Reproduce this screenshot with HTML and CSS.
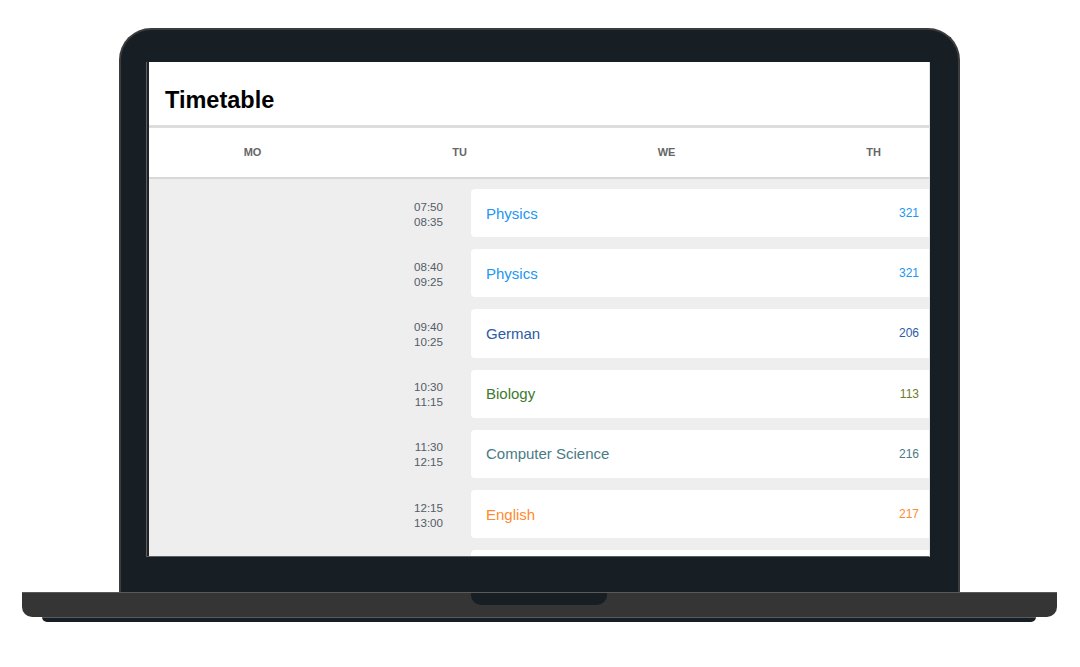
FILE: index.html
```html
<!DOCTYPE html>
<html lang="en">
<head>
<meta charset="utf-8">
<title>Timetable</title>
<link rel="stylesheet" href="styles.css">
</head>
<body>
<div class="device">
  <div class="lid">
    <div class="screen">
      <div class="app">
        <header class="app-header"><h1>Timetable</h1></header>
        <div class="days">
          <div class="day">MO</div>
          <div class="day">TU</div>
          <div class="day">WE</div>
          <div class="day">TH</div>
        </div>
        <div class="lessons">
          <div class="lesson physics">
            <div class="time"><span>07:50</span><span>08:35</span></div>
            <div class="card"><span class="subject">Physics</span><span class="room">321</span></div>
          </div>
          <div class="lesson physics">
            <div class="time"><span>08:40</span><span>09:25</span></div>
            <div class="card"><span class="subject">Physics</span><span class="room">321</span></div>
          </div>
          <div class="lesson german">
            <div class="time"><span>09:40</span><span>10:25</span></div>
            <div class="card"><span class="subject">German</span><span class="room">206</span></div>
          </div>
          <div class="lesson biology">
            <div class="time"><span>10:30</span><span>11:15</span></div>
            <div class="card"><span class="subject">Biology</span><span class="room">113</span></div>
          </div>
          <div class="lesson cs">
            <div class="time"><span>11:30</span><span>12:15</span></div>
            <div class="card"><span class="subject">Computer Science</span><span class="room">216</span></div>
          </div>
          <div class="lesson english">
            <div class="time"><span>12:15</span><span>13:00</span></div>
            <div class="card"><span class="subject">English</span><span class="room">217</span></div>
          </div>
          <div class="lesson physics">
            <div class="time"></div>
            <div class="card"></div>
          </div>
        </div>
      </div>
    </div>
  </div>
  <div class="base"><div class="notch"></div></div>
  <div class="foot"></div>
</div>
</body>
</html>
```
FILE: styles.css
```css
html, body {
  margin: 0;
  padding: 0;
  background: #ffffff;
  font-family: "Liberation Sans", Arial, sans-serif;
}

.device {
  width: 1080px;
  height: 667px;
  box-sizing: border-box;
  padding-top: 28px;
  display: flex;
  flex-direction: column;
  align-items: flex-start;
}

.lid {
  margin-left: 119px;
  width: 841px;
  height: 564px;
  box-sizing: border-box;
  background: #171e24;
  border: 2px solid #3c3c3c;
  border-bottom: none;
  border-radius: 32px 32px 0 0;
  padding: 32px 0 0 25px;
  flex: none;
}

.screen {
  width: 784px;
  height: 495px;
  box-sizing: border-box;
  background: #1f2429;
  border-left: 1px solid #5e5e5e;
  border-bottom: 1px solid #5e5e5e;
  border-right: 1px solid #e2e2e2;
  padding-left: 2px;
}

.app {
  width: 780px;
  height: 494px;
  overflow: hidden;
  background: #eeeeee;
  display: flex;
  flex-direction: column;
}

.app-header {
  flex: none;
  height: 66px;
  box-sizing: border-box;
  padding: 24px 16px 0;
  background: #ffffff;
  border-bottom: 3px solid #dddddd;
}

.app-header h1 {
  margin: 0;
  font-size: 23.5px;
  line-height: 1.2;
  font-weight: bold;
  color: #000000;
}

.days {
  flex: none;
  display: flex;
  height: 51px;
  box-sizing: border-box;
  padding-bottom: 1px;
  background: #ffffff;
  border-bottom: 2px solid #d8d8d8;
}

.day {
  flex: 0 0 207px;
  display: flex;
  align-items: center;
  justify-content: center;
  font-size: 11px;
  font-weight: bold;
  color: #666666;
}

.lessons {
  padding-top: 10px;
  display: flex;
  flex-direction: column;
  gap: 12px;
}

.lesson {
  flex: none;
  display: flex;
  align-items: center;
  height: 48.2px;
}

.time {
  width: 294px;
  flex: none;
  display: flex;
  flex-direction: column;
  align-items: flex-end;
  padding-top: 1px;
  font-size: 11.6px;
  line-height: 15px;
  color: #545c66;
}

.card {
  flex: 1;
  align-self: stretch;
  margin-left: 28px;
  margin-right: -8px;
  box-sizing: border-box;
  padding: 0 18px 0 15px;
  background: #ffffff;
  border-radius: 4px;
  display: flex;
  align-items: center;
  justify-content: space-between;
}

.subject {
  font-size: 15px;
}

.room {
  font-size: 12px;
}

.physics .card { color: #2196f3; }
.german .card { color: #2a5ba6; }
.biology .card { color: #3e7a30; }
.cs .card { color: #4a7a86; }
.english .card { color: #ff8a30; }
.biology .room { color: #6f7a2c; }

.base {
  margin-left: 22px;
  width: 1035px;
  height: 25px;
  box-sizing: border-box;
  background: #353535;
  border-top: 1px solid #5a5a5a;
  border-radius: 0 0 10px 10px;
  display: flex;
  justify-content: center;
  flex: none;
}

.notch {
  width: 136px;
  height: 12px;
  margin-left: -1px;
  background: #171e24;
  border-radius: 0 0 10px 10px;
}

.foot {
  margin-left: 42px;
  width: 994px;
  height: 5px;
  box-sizing: border-box;
  background: #171e24;
  border-top: 1px solid #5a5a5a;
  border-radius: 0 0 6px 6px;
  flex: none;
}
```
